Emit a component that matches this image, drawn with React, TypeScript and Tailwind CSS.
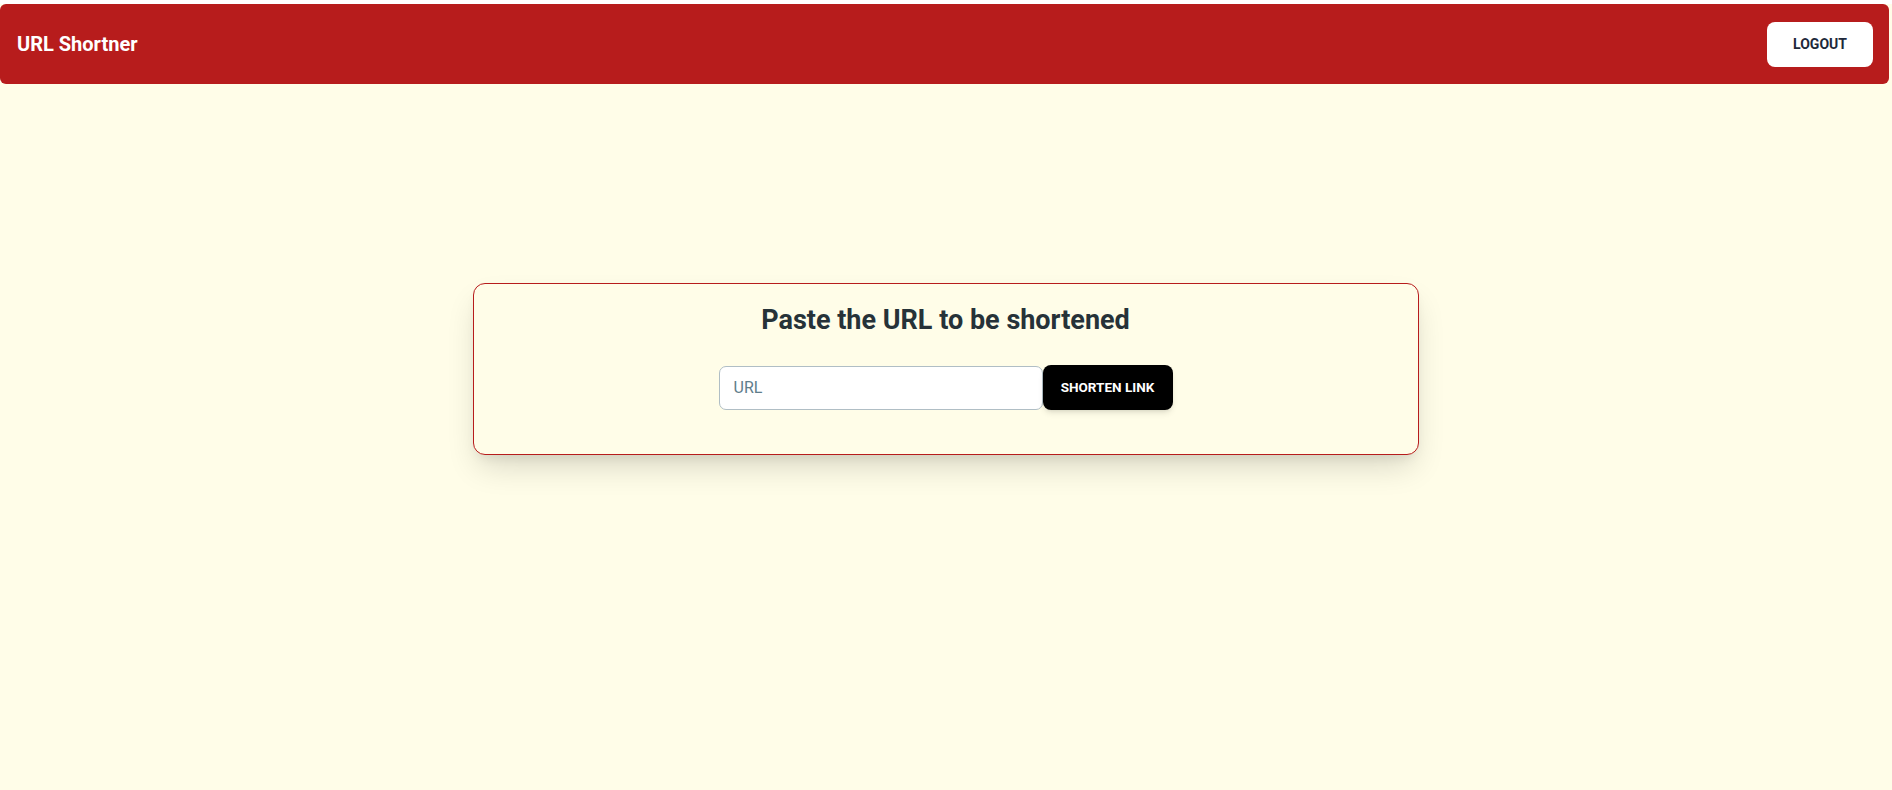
import React from "react";

export default function App() {
  return (
    <div
      className="min-h-[790px] w-full bg-[#fffde8]"
      style={{ fontFamily: "Roboto, 'Liberation Sans', sans-serif" }}
    >
      <nav className="mt-1 mr-[3px] flex h-20 items-center justify-between rounded-md bg-[#b71c1c] pl-[17px] pr-4">
        <span className="text-[20px] font-bold leading-none text-white">URL Shortner</span>
        <button className="h-[45px] w-[106px] rounded-lg bg-white text-[14px] font-bold uppercase text-[#1e293b]">
          LOGOUT
        </button>
      </nav>
      <main className="flex justify-center pt-[199px]">
        <div className="mr-[1px] flex h-[172px] w-[946px] flex-col items-center rounded-xl border border-[#b71c1c] bg-[#fffde8] pt-[18px] shadow-[0_16px_32px_-6px_rgba(0,0,0,0.16),0_6px_12px_-4px_rgba(0,0,0,0.08)]">
          <h1 className="text-[27px] font-bold leading-[36px] text-[#263238]">
            Paste the URL to be shortened
          </h1>
          <div className="mt-[27px] flex items-center">
            <input
              placeholder="URL"
              className="h-[44px] w-[324px] rounded-[7px] border border-[#b0bec5] bg-white px-[14px] text-[16px] text-[#263238] outline-none placeholder:text-[#607d8b]"
            />
            <button className="h-[45px] w-[130px] rounded-lg bg-black text-[13.5px] font-bold uppercase text-white shadow-md">
              SHORTEN LINK
            </button>
          </div>
        </div>
      </main>
    </div>
  );
}
